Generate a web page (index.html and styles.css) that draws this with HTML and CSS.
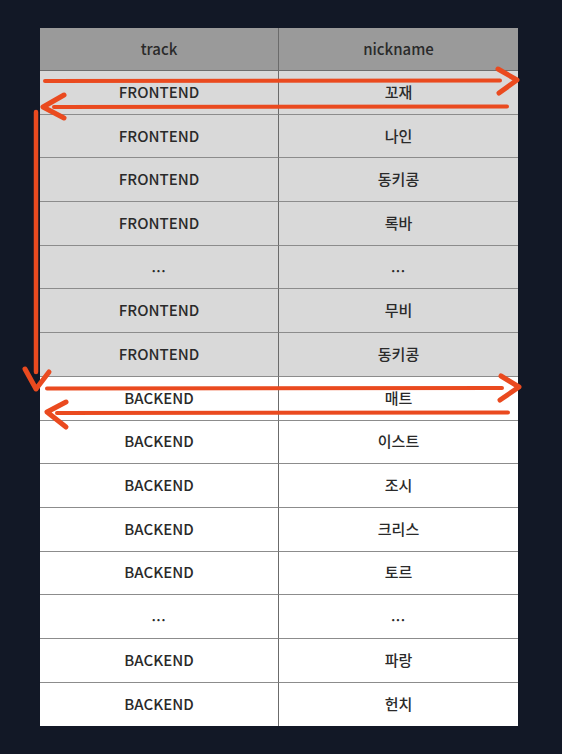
FILE: index.html
```html
<!DOCTYPE html>
<html lang="ko">
<head>
<meta charset="utf-8">
<title>track / nickname</title>
<link rel="stylesheet" href="styles.css">
</head>
<body>
<div class="stage">
  <div class="table">
    <div class="cell head">track</div><div class="cell head">nickname</div>
    <div class="cell fe">FRONTEND</div><div class="cell fe">꼬재</div>
    <div class="cell fe">FRONTEND</div><div class="cell fe">나인</div>
    <div class="cell fe">FRONTEND</div><div class="cell fe">동키콩</div>
    <div class="cell fe">FRONTEND</div><div class="cell fe">록바</div>
    <div class="cell fe dots">...</div><div class="cell fe dots">...</div>
    <div class="cell fe">FRONTEND</div><div class="cell fe">무비</div>
    <div class="cell fe">FRONTEND</div><div class="cell fe">동키콩</div>
    <div class="cell be">BACKEND</div><div class="cell be">매트</div>
    <div class="cell be">BACKEND</div><div class="cell be">이스트</div>
    <div class="cell be">BACKEND</div><div class="cell be">조시</div>
    <div class="cell be">BACKEND</div><div class="cell be">크리스</div>
    <div class="cell be">BACKEND</div><div class="cell be">토르</div>
    <div class="cell be dots">...</div><div class="cell be dots">...</div>
    <div class="cell be">BACKEND</div><div class="cell be">파랑</div>
    <div class="cell be last">BACKEND</div><div class="cell be last">헌치</div>
  </div>
  <svg class="marks" width="562" height="754" viewBox="0 0 562 754">
    <g fill="none" stroke="#ea4a1f" stroke-linecap="round" stroke-linejoin="round">
      <path d="M45 81 L500 80.5" stroke-width="4"/>
      <path d="M498 69 L517 80 L499 93" stroke-width="5"/>
      <path d="M54 107 L507 106.5" stroke-width="4"/>
      <path d="M64 95 L43 107 L64 118" stroke-width="5"/>
      <path d="M36 112 L36 372" stroke-width="4.5"/>
      <path d="M25 369 L36 389 L49 372" stroke-width="5"/>
      <path d="M47 388.5 L502 388" stroke-width="4"/>
      <path d="M501 376 L519 387 L500 400" stroke-width="5"/>
      <path d="M57 413 L508 412.5" stroke-width="4"/>
      <path d="M66 402 L47 412 L66 427" stroke-width="5"/>
    </g>
  </svg>
</div>
</body>
</html>
```

FILE: styles.css
```css
html, body {
  margin: 0;
  padding: 0;
  background: #121826;
}
.stage {
  position: relative;
  width: 562px;
  height: 754px;
  padding-top: 28px;
  box-sizing: border-box;
}
.table {
  margin-left: 40px;
  width: 478px;
  display: grid;
  grid-template-columns: 239px 239px;
  grid-template-rows: 43px;
  grid-auto-rows: 43.7px;
  font-family: "Noto Sans CJK KR", "Noto Sans", sans-serif;
  font-size: 15px;
  font-weight: 500;
  color: #2a2a2a;
}
.cell {
  display: flex;
  align-items: center;
  justify-content: center;
  padding-bottom: 2px;
  border-bottom: 1.5px solid #8c8c8c;
  box-sizing: border-box;
}
.cell:nth-child(odd) {
  border-right: 1.5px solid #6b6b6b;
}
.head {
  background: #9a9a9a;
  border-bottom-color: #6e6e6e;
}
.fe {
  background: #d9d9d9;
}
.be {
  background: #ffffff;
}
.last {
  border-bottom: none;
}
.dots {
  font-size: 12px;
  font-weight: 700;
  letter-spacing: 1px;
}
.marks {
  position: absolute;
  left: 0;
  top: 0;
}
```
